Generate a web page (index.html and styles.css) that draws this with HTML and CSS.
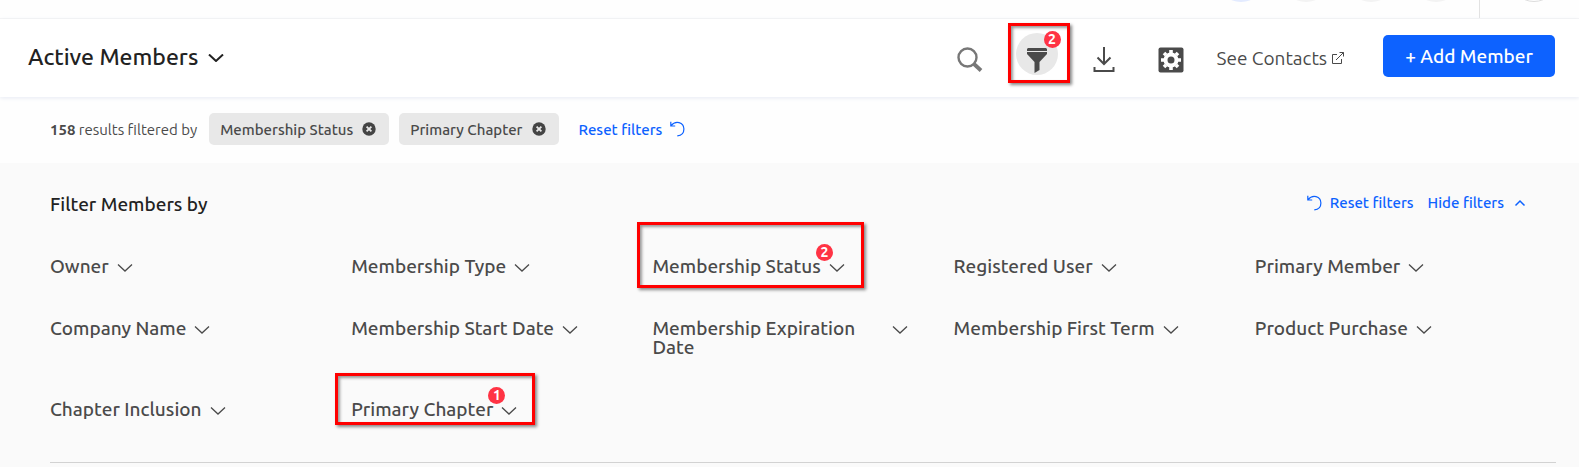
FILE: index.html
```html
<!DOCTYPE html>
<html lang="en">
<head>
    <meta charset="UTF-8">
    <meta name="viewport" content="width=device-width, initial-scale=1.0">
    <title>Active Members</title>
    <link rel="stylesheet" href="styles.css">
</head>
<body>

<!-- Shared icons -->
<svg class="sprite" aria-hidden="true">
    <symbol id="chevron" viewBox="0 0 16 8">
        <path d="M1 .5l7 6.5 7-6.5" fill="none" stroke="currentColor"/>
    </symbol>
    <symbol id="remove" viewBox="0 0 14 14">
        <circle cx="7" cy="7" r="6.7" fill="#444"/>
        <path d="M4.6 4.6l4.8 4.8M9.4 4.6L4.6 9.4" stroke="#e8e8e8" stroke-width="1.8"/>
    </symbol>
    <symbol id="reset" viewBox="0 0 15 16">
        <path d="M1 4.6C5.500 -1 13.800 1 13.900 8c0 4.200-3 6.600-6.600 6.900M.8 .8v4.200h4.400" fill="none" stroke="currentColor" stroke-width="1.200"/>
    </symbol>
</svg>

<nav class="topbar">
    <button class="topbar-item active" aria-label="Home"></button>
    <button class="topbar-item" aria-label="Messages"></button>
    <button class="topbar-item" aria-label="Alerts"></button>
    <button class="topbar-item" aria-label="Help"></button>
    <div class="profile">
        <button class="avatar" aria-label="Profile"></button>
    </div>
</nav>

<header class="header">
    <h1><button class="title-btn">Active Members <svg class="chevron bold"><use href="#chevron"/></svg></button></h1>

    <div class="tools">
        <button class="icon-btn" aria-label="Search">
            <svg width="26" height="26" viewBox="0 0 26 26">
                <circle cx="10.500" cy="10.500" r="9" fill="none" stroke="#777" stroke-width="2.400"/>
                <path d="M17 17l7 6.500" stroke="#777" stroke-width="3.800"/>
            </svg>
        </button>
        <button class="icon-btn selected marked" aria-label="Filter">
            <svg width="22" height="26" viewBox="0 0 22 26">
                <path d="M2 0h18l1 1v2H1V1z" fill="#4a4a4a"/>
                <path d="M1 4h20v2l-7.500 8v8L8.500 25V14L1 6z" fill="#4a4a4a"/>
            </svg>
            <span class="badge">2</span>
        </button>
        <button class="icon-btn" aria-label="Download">
            <svg width="22" height="26" viewBox="0 0 22 26">
                <path d="M11 0v16M4.500 10.500L11 17l6.500-6.500M1.500 20v4h19v-4" fill="none" stroke="#4a4a4a" stroke-width="2"/>
            </svg>
        </button>
        <button class="icon-btn" aria-label="Settings">
            <svg width="26" height="26" viewBox="0 0 26 26">
                <rect x=".5" y=".5" width="25" height="25" rx="2" fill="#4a4a4a"/>
                <circle cx="13" cy="13" r="5.500" fill="none" stroke="#fff" stroke-width="4"/>
                <path d="M13 3v3M13 20v3M3 13h3M20 13h3M6 6l2 2M18 18l2 2M20 6l-2 2M8 18l-2 2" stroke="#fff" stroke-width="3.600"/>
            </svg>
        </button>
        <a class="contacts" href="#">See Contacts
            <svg width="12" height="12" viewBox="0 0 12 12">
                <path d="M5 2.500H.5v9h9V7M7.500.5h4v4M11.500.5L4 8" fill="none" stroke="currentColor"/>
            </svg>
        </a>
        <button class="add-btn">+ Add Member</button>
    </div>
</header>

<div class="results">
    <span class="count"><strong>158</strong> results filtered by</span>
    <button class="chip">Membership Status <svg><use href="#remove"/></svg></button>
    <button class="chip">Primary Chapter <svg><use href="#remove"/></svg></button>
    <button class="link">Reset filters <svg class="reset"><use href="#reset"/></svg></button>
</div>

<section class="filters">
    <div class="filters-head">
        <h2>Filter Members by</h2>
        <div class="actions">
            <button class="link"><svg class="reset"><use href="#reset"/></svg> Reset filters</button>
            <button class="link">Hide filters
                <svg class="up" viewBox="0 0 12 8"><path d="M1.500 6.500L6 2l4.500 4.500" fill="none" stroke="currentColor" stroke-width="1.500"/></svg>
            </button>
        </div>
    </div>

    <div class="filter-grid">
        <button class="filter"><span>Owner</span><svg class="chevron"><use href="#chevron"/></svg></button>
        <button class="filter"><span>Membership Type</span><svg class="chevron"><use href="#chevron"/></svg></button>
        <button class="filter marked status"><span>Membership Status</span><svg class="chevron"><use href="#chevron"/></svg><span class="badge">2</span></button>
        <button class="filter"><span>Registered User</span><svg class="chevron"><use href="#chevron"/></svg></button>
        <button class="filter"><span>Primary Member</span><svg class="chevron"><use href="#chevron"/></svg></button>
        <button class="filter"><span>Company Name</span><svg class="chevron"><use href="#chevron"/></svg></button>
        <button class="filter"><span>Membership Start Date</span><svg class="chevron"><use href="#chevron"/></svg></button>
        <button class="filter"><span>Membership Expiration Date</span><svg class="chevron"><use href="#chevron"/></svg></button>
        <button class="filter"><span>Membership First Term</span><svg class="chevron"><use href="#chevron"/></svg></button>
        <button class="filter"><span>Product Purchase</span><svg class="chevron"><use href="#chevron"/></svg></button>
        <button class="filter"><span>Chapter Inclusion</span><svg class="chevron"><use href="#chevron"/></svg></button>
        <button class="filter marked chapter"><span>Primary Chapter</span><svg class="chevron"><use href="#chevron"/></svg><span class="badge">1</span></button>
    </div>
</section>

</body>
</html>
```
FILE: styles.css
```css
* {
    box-sizing: border-box;
}
body {
    margin: 0;
    min-height: 100vh;
    display: flex;
    flex-direction: column;
    font-family: Ubuntu, "Noto Sans", sans-serif;
    font-size: 19px;
    color: #4a4a4a;
    background: #fefefe;
}
button {
    font: inherit;
    color: inherit;
    background: none;
    border: none;
    padding: 0;
    cursor: pointer;
}
h1, h2 {
    margin: 0;
    font-weight: 500;
    color: #222;
}
svg {
    flex: none;
}
.sprite {
    display: none;
}

/* top navigation */
.topbar {
    height: 19px;
    display: flex;
    justify-content: flex-end;
    align-items: flex-end;
    gap: 17px;
    border-bottom: 1px solid #f5f5f5;
    overflow: hidden;
}
.topbar-item {
    width: 48px;
    height: 48px;
    margin-bottom: 16px;
    border-radius: 50%;
    background: #f3f3f3;
}
.topbar-item.active {
    background: #e3ebff;
}
.profile {
    height: 100%;
    display: flex;
    align-items: flex-end;
    margin-left: 2px;
    padding: 0 21px 0 30px;
    border-left: 1px solid #e2e2e2;
}
.avatar {
    width: 48px;
    height: 48px;
    margin-bottom: 16px;
    border: 1px solid #ddd;
    border-radius: 50%;
}

/* page header */
.header {
    height: 78px;
    display: flex;
    align-items: center;
    justify-content: space-between;
    padding: 0 24px 4px 28px;
    background: #fff;
    box-shadow: 0 1px 4px #e6eaf3;
}
.title-btn {
    display: flex;
    align-items: center;
    gap: 10px;
    font-size: 23px;
}
.chevron {
    width: 16px;
    height: 8px;
    stroke-width: 1.3;
}
.chevron.bold {
    stroke-width: 2;
    margin-top: 4px;
}
.tools {
    display: flex;
    align-items: center;
    gap: 25px;
}
.icon-btn {
    width: 42px;
    height: 42px;
    display: flex;
    align-items: center;
    justify-content: center;
    padding-top: 8px;
}
.icon-btn.selected {
    margin-bottom: 4px;
    padding-top: 14px;
    border-radius: 50%;
    background: #e8e8e8;
}
.contacts {
    display: flex;
    align-items: center;
    gap: 5px;
    margin-right: 14px;
    padding-top: 4px;
    color: inherit;
    text-decoration: none;
}
.add-btn {
    height: 42px;
    padding: 0 22px;
    border-radius: 5px;
    background: #0d62ff;
    color: #fff;
    font-weight: 500;
}

/* applied filters */
.results {
    display: flex;
    align-items: center;
    padding: 16px 50px 18px;
    font-size: 15px;
}
.count {
    margin-right: 12px;
}
.chip {
    height: 32px;
    display: flex;
    align-items: center;
    gap: 9px;
    margin-right: 10px;
    padding: 0 13px 0 11px;
    border-radius: 5px;
    background: #e8e8e8;
    font-weight: 500;
}
.chip svg {
    width: 14px;
    height: 14px;
}
.link {
    display: flex;
    align-items: center;
    gap: 8px;
    color: #0d62ff;
    font-size: 15px;
    font-weight: 500;
}
.results .link {
    margin-left: 10px;
}
.reset {
    width: 15px;
    height: 16px;
}
.up {
    width: 12px;
    height: 8px;
    margin-left: 2px;
}

/* filter panel */
.filters {
    flex: 1;
    padding: 29px 23px 0 50px;
    background: #fafafa;
}
.filters-head {
    display: flex;
    justify-content: space-between;
    align-items: flex-start;
    margin-bottom: 41px;
    line-height: 24px;
}
h2 {
    font-size: 19px;
}
.actions {
    display: flex;
    gap: 14px;
    margin-right: 30px;
    line-height: 22px;
}
.filter-grid {
    display: grid;
    grid-template-columns: repeat(5, 1fr);
    row-gap: 43px;
    padding-bottom: 43px;
    border-bottom: 1px solid #d2d2d2;
}
.filter {
    position: relative;
    justify-self: start;
    align-self: start;
    max-width: 256px;
    display: flex;
    gap: 8px;
    font-weight: 500;
    line-height: 19px;
    text-align: left;
}
.filter .chevron {
    margin-top: 7px;
}

/* count badge, sits over the icon or label */
.badge {
    position: absolute;
    right: 12px;
    top: -13px;
    width: 17px;
    height: 17px;
    border-radius: 50%;
    background: #ff3344;
    color: #fff;
    font-size: 14px;
    font-weight: 700;
    line-height: 17px;
    text-align: center;
}
.icon-btn .badge {
    right: -3px;
    top: -2px;
}

/* red highlight frame */
.marked {
    position: relative;
}
.marked::after {
    content: "";
    position: absolute;
    border: 3px solid #f00;
    box-shadow: 2px 2px 3px #888, inset 2px 2px 3px #999;
    pointer-events: none;
}
.icon-btn.marked::after {
    inset: -10px -12px -8px -8px;
}
.status::after {
    inset: -35px -19px -12px -15px;
}
.chapter::after {
    inset: -27px -18px -6px -16px;
}
```
